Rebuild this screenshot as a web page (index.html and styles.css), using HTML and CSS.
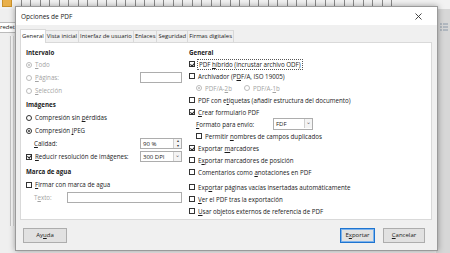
FILE: index.html
```html
<!DOCTYPE html>
<html lang="es">
<head>
    <meta charset="UTF-8">
    <title>Opciones de PDF</title>
    <link rel="stylesheet" href="styles.css">
</head>
<body>
<div class="desktop">
    <div class="app-toolbar">
        <span class="tb folder"></span>
        <span class="tb"></span><span class="tb"></span><span class="tb"></span><span class="tb"></span>
        <span class="tb"></span><span class="tb"></span><span class="tb"></span><span class="tb"></span>
        <span class="tb"></span><span class="tb"></span><span class="tb"></span><span class="tb"></span>
        <span class="tb"></span><span class="tb"></span><span class="tb"></span><span class="tb"></span>
        <span class="tb"></span><span class="tb"></span><span class="tb"></span><span class="tb"></span>
    </div>
    <div class="app-body">
        <div class="app-left">
            <div class="style-box">redet</div>
            <div class="ruler"></div>
        </div>
        <div class="app-main"></div>
        <div class="app-right">
            <svg class="side-icon" width="8" height="9" viewBox="0 0 8 9"><path d="M0 1h2M3 1h5M0 4h2M3 4h5M0 7h2M3 7h5" stroke="#8a98a8" stroke-width="1"/></svg>
        </div>
    </div>

    <div class="dialog">
        <div class="titlebar">
            <span class="title">Opciones de PDF</span>
            <svg class="close" width="7" height="7" viewBox="0 0 7 7"><path d="M0.5 0.5l6 6M6.5 0.5l-6 6" stroke="#333" stroke-width="0.9"/></svg>
        </div>

        <div class="tabs">
            <span class="tab active">General</span>
            <span class="tab">Vista inicial</span>
            <span class="tab">Interfaz de usuario</span>
            <span class="tab">Enlaces</span>
            <span class="tab">Seguridad</span>
            <span class="tab">Firmas digitales</span>
        </div>

        <div class="panel">
            <div class="col col-left">
                <div class="heading">Intervalo</div>
                <div class="row off"><span class="radio checked"></span><span><u>T</u>odo</span></div>
                <div class="row off"><span class="radio"></span><span><u>P</u>áginas:</span><span class="spacer"></span><span class="field short"></span></div>
                <div class="row off"><span class="radio"></span><span><u>S</u>elección</span></div>

                <div class="heading">Imágenes</div>
                <div class="row"><span class="radio"></span><span>Compresión sin <u>p</u>érdidas</span></div>
                <div class="row"><span class="radio checked"></span><span>Compresión <u>J</u>PEG</span></div>
                <div class="row indent"><span><u>C</u>alidad:</span><span class="spacer"></span><span class="field short spin">90 %<span class="arrows">▴<br>▾</span></span></div>
                <div class="row"><span class="check checked"></span><span><u>R</u>educir resolución de imágenes:</span><span class="spacer"></span><span class="field short combo">300 DPI<span class="drop">⌄</span></span></div>

                <div class="heading">Marca de agua</div>
                <div class="row"><span class="check"></span><span><u>F</u>irmar con marca de agua</span></div>
                <div class="row indent off"><span>T<u>e</u>xto:</span><span class="field long"></span></div>
            </div>

            <div class="col col-right">
                <div class="heading">General</div>
                <div class="row"><span class="check checked"></span><span class="focus">PDF <u>h</u>íbrido (incrustar archivo ODF)</span></div>
                <div class="row"><span class="check"></span><span>Archivador (P<u>D</u>F/A, ISO 19005)</span></div>
                <div class="row indent off"><span class="radio checked"></span><span class="gap">PDF/A-<u>2</u>b</span><span class="radio"></span><span>PDF/A-<u>1</u>b</span></div>
                <div class="row"><span class="check"></span><span>PDF con e<u>t</u>iquetas (añadir estructura del documento)</span></div>
                <div class="row"><span class="check checked"></span><span><u>C</u>rear formulario PDF</span></div>
                <div class="row indent"><span class="label-w"><u>F</u>ormato para envío:</span><span class="field combo fdf">FDF<span class="drop">⌄</span></span></div>
                <div class="row indent"><span class="check"></span><span>Permitir <u>n</u>ombres de campos duplicados</span></div>
                <div class="row"><span class="check checked"></span><span>Exportar <u>m</u>arcadores</span></div>
                <div class="row"><span class="check"></span><span>E<u>x</u>portar marcadores de posición</span></div>
                <div class="row"><span class="check"></span><span>Comentarios como <u>a</u>notaciones en PDF</span></div>
                <div class="row sep"><span class="check"></span><span>Exp<u>o</u>rtar páginas vacías insertadas automáticamente</span></div>
                <div class="row"><span class="check"></span><span><u>V</u>er el PDF tras la exportación</span></div>
                <div class="row"><span class="check"></span><span><u>U</u>sar objetos externos de referencia de PDF</span></div>
            </div>
        </div>

        <div class="buttons">
            <span class="btn help">Ay<u>u</u>da</span>
            <span class="spacer"></span>
            <span class="btn default">E<u>x</u>portar</span>
            <span class="btn"><u>C</u>ancelar</span>
        </div>
    </div>
</div>
</body>
</html>
```

FILE: styles.css
```css
* {
    box-sizing: border-box;
}

body {
    margin: 0;
    width: 450px;
    height: 253px;
    overflow: hidden;
    font-family: "Open Sans", "Noto Sans", sans-serif;
    font-size: 6.2px;
    color: #1a1a1a;
}

.desktop {
    position: relative;
    width: 450px;
    height: 253px;
    background: #e4e4e4;
    display: flex;
    flex-direction: column;
}

/* the LibreOffice window behind the dialog */
.app-toolbar {
    height: 9px;
    background: #f2f2f2;
    display: flex;
    gap: 9px;
    padding: 0 0 0 2px;
    overflow: hidden;
}

.tb {
    width: 10px;
    height: 7px;
    border: 1px solid #8a8a8a;
    border-top: none;
    flex: none;
}

.tb.folder {
    background: #e9b04a;
    border-color: #c8902a;
}

.app-body {
    flex: 1;
    display: flex;
}

.app-left {
    width: 16px;
    background: #efefef;
    padding-top: 13px;
}

.style-box {
    background: #fff;
    border: 1px solid #bbb;
    border-left: none;
    height: 11px;
    font-size: 6px;
    line-height: 9px;
    overflow: hidden;
}

.ruler {
    margin: 3px 0 0 10px;
    width: 4px;
    height: 190px;
    border-left: 1px solid #c4c4c4;
    border-right: 1px solid #d6d6d6;
    background: #f7f7f7;
}

.app-main {
    flex: 1;
    background: #ececec;
}

.app-right {
    width: 14px;
    background: #d7d7d7;
    padding: 14px 0 0 4px;
}

/* dialog */
.dialog {
    position: absolute;
    left: 15px;
    top: 6px;
    width: 423px;
    height: 245px;
    background: #f0f0f0;
    border: 1px solid #9a9a9a;
    box-shadow: 0 0 6px rgba(0, 0, 0, 0.35);
    display: flex;
    flex-direction: column;
}

.titlebar {
    height: 18px;
    background: #fff;
    display: flex;
    align-items: center;
    justify-content: space-between;
    padding: 0 15px 0 5px;
}

.title {
    font-size: 6.5px;
}

.tabs {
    display: flex;
    padding: 3px 0 0 4px;
    height: 17px;
    align-items: flex-end;
}

.tab {
    border: 1px solid #d9d9d9;
    border-bottom: none;
    border-left: none;
    background: #f0f0f0;
    height: 12px;
    line-height: 11px;
    padding: 0 1px;
    font-size: 5.9px;
}

.tab.active {
    background: #fff;
    border-left: 1px solid #d9d9d9;
    height: 14px;
    line-height: 13px;
    margin-bottom: -1px;
    position: relative;
}

.panel {
    margin: 0 5px 0 4px;
    height: 178px;
    background: #fff;
    border: 1px solid #d9d9d9;
    display: flex;
    gap: 7px;
    padding: 4px 0 0 5px;
}

.col-left {
    width: 156px;
}

.col-right {
    flex: 1;
}

.heading {
    font-weight: bold;
    height: 11px;
    line-height: 11px;
}

.col-left .heading {
    height: 12px;
    line-height: 12px;
    margin-top: 2px;
}

.col-left .heading:first-child {
    height: 11px;
    line-height: 11px;
    margin-top: 0;
}

.col-left .heading:nth-child(10) {
    margin-top: 3px;
}

.row {
    display: flex;
    align-items: center;
    gap: 3px;
    height: 13px;
}

.col-right .row {
    height: 12px;
}

.row.indent {
    padding-left: 8px;
}

.col-right .row.indent {
    padding-left: 7px;
}

.row.sep {
    margin-top: 3px;
}

.row.off {
    color: #a3a3a3;
}

.spacer {
    flex: 1;
}

.radio {
    width: 6px;
    height: 6px;
    border: 1px solid #333;
    border-radius: 50%;
    background: #fff;
    flex: none;
    display: flex;
    align-items: center;
    justify-content: center;
}

.radio.checked::after {
    content: "";
    width: 2px;
    height: 2px;
    border-radius: 50%;
    background: #333;
}

.off .radio {
    border-color: #bcbcbc;
}

.off .radio.checked::after {
    background: #bcbcbc;
}

.check {
    width: 6px;
    height: 6px;
    border: 1px solid #333;
    background: #fff;
    flex: none;
    position: relative;
}

.check.checked::after {
    content: "";
    position: absolute;
    left: 1px;
    top: -0.5px;
    width: 1.5px;
    height: 3px;
    border: solid #222;
    border-width: 0 0.8px 0.8px 0;
    transform: rotate(40deg);
}

.focus {
    outline: 1px dotted #555;
    outline-offset: 0;
    padding: 0 1px;
}

.gap {
    margin-right: 9px;
}

.field {
    background: #fff;
    border: 1px solid #adadad;
    height: 11px;
    display: flex;
    align-items: center;
    padding-left: 2px;
    font-size: 6px;
    color: #1a1a1a;
    position: relative;
}

.field.short {
    width: 42px;
}

.field.long {
    width: 119px;
    margin-left: 12px;
}

.arrows,
.drop {
    position: absolute;
    right: 0;
    top: 0;
    height: 9px;
    width: 8px;
    border-left: 1px solid #d0d0d0;
    background: #f4f4f4;
    font-size: 4px;
    line-height: 4.5px;
    text-align: center;
    color: #333;
}

.drop {
    font-size: 6px;
    line-height: 7px;
    color: #666;
}

.label-w {
    width: 74px;
}

.field.fdf {
    width: 40px;
    height: 12px;
}

.buttons {
    flex: 1;
    display: flex;
    align-items: center;
    gap: 8px;
    padding: 0 12px 0 7px;
}

.btn {
    height: 15px;
    padding: 0 8px;
    background: #e1e1e1;
    border: 1px solid #adadad;
    line-height: 13px;
    font-size: 6px;
    text-align: center;
}

.btn.help {
    width: 44px;
}

.btn.default {
    border: 1px solid #1e74d0;
    box-shadow: inset 0 0 0 1px #7db3ec;
    width: 35px;
    padding: 0;
}

.btn:last-child {
    width: 42px;
    padding: 0;
}

u {
    text-decoration-thickness: 0.5px;
    text-underline-offset: 1px;
}
```
